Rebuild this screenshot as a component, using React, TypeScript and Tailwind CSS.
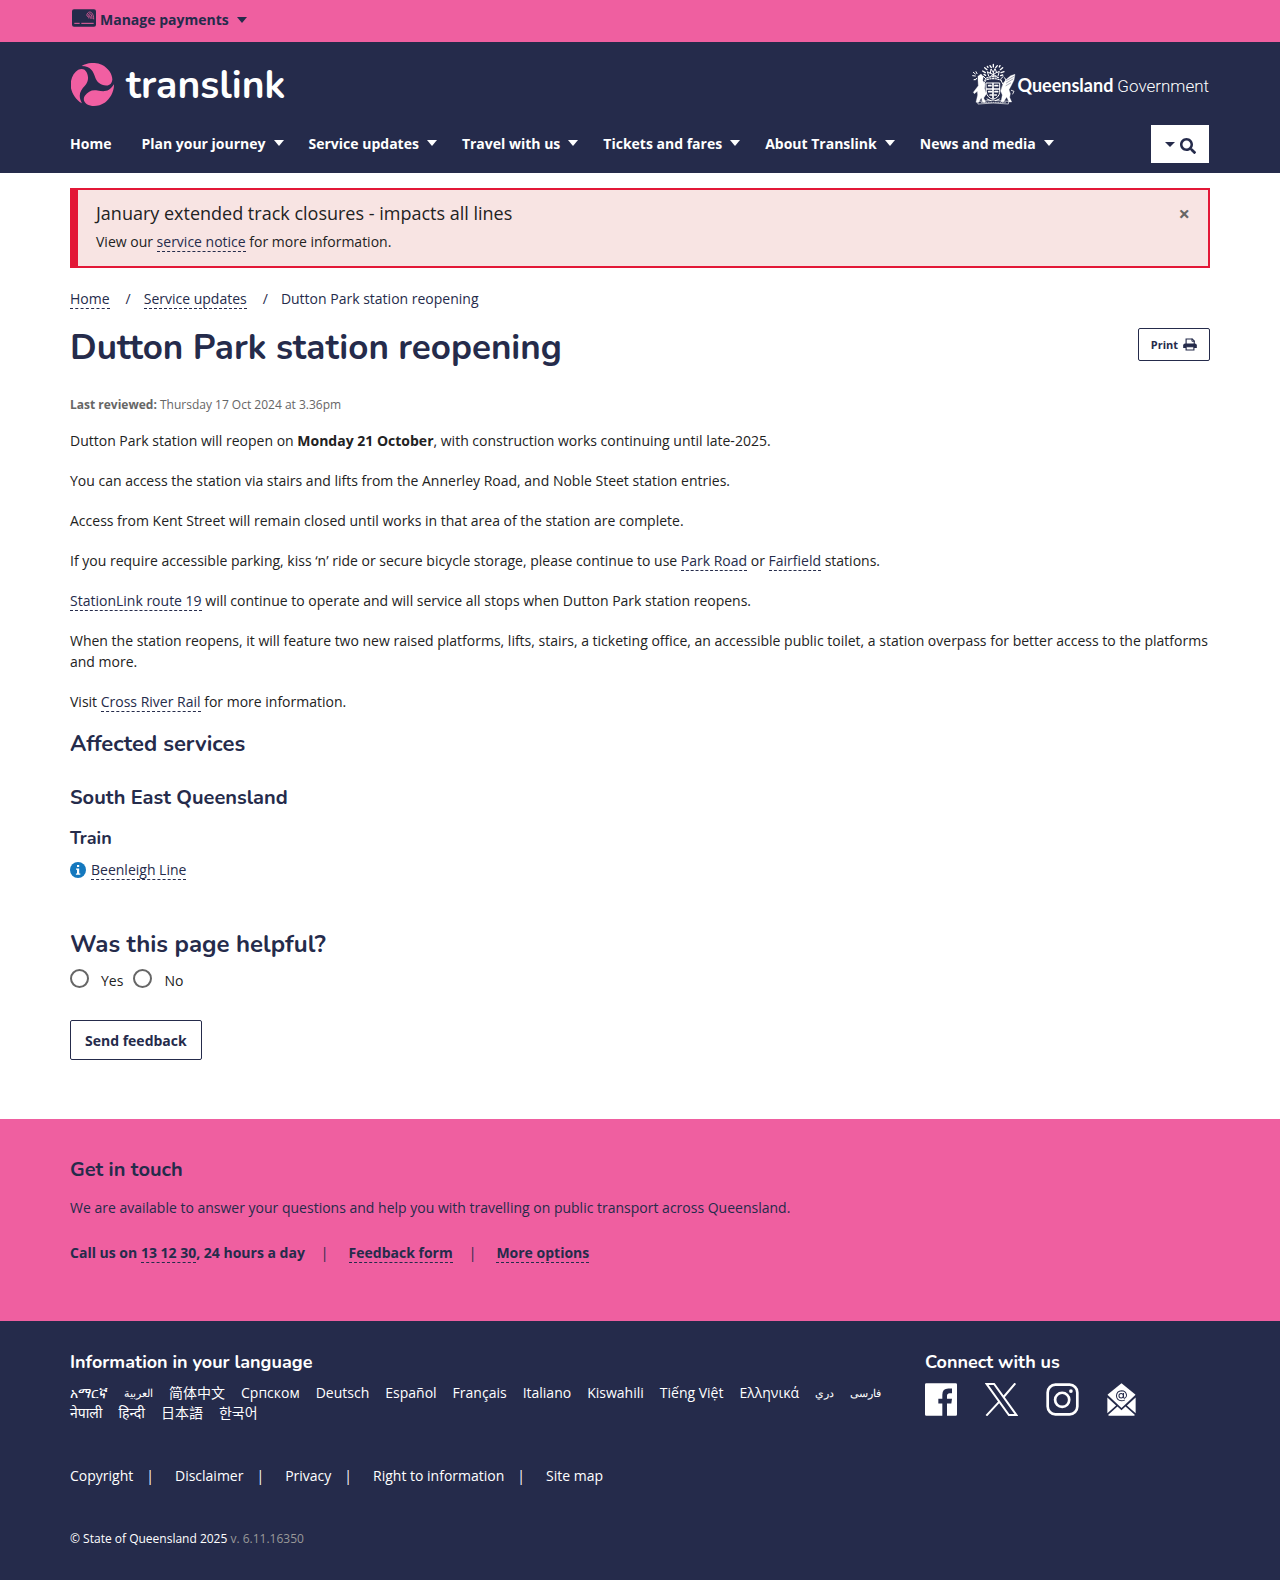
import React from "react";
import { FaSearch } from "react-icons/fa";

const heading = "font-['Nunito','Lato',sans-serif]";

function Caret({ small = false }: { small?: boolean }) {
  return (
    <span
      aria-hidden="true"
      className={`inline-block border-x-transparent border-t-current ${small ? "border-x-[5px] border-t-[5px]" : "border-x-[5px] border-t-[6px]"}`}
    />
  );
}

function DashedLink({ children }: { children: React.ReactNode }) {
  return (
    <a href="#" className="border-b border-dashed border-[#252b4b] text-[#252b4b]">
      {children}
    </a>
  );
}

function CardIcon() {
  return (
    <svg viewBox="0 0 72 54" className="-mt-1 h-[18px] w-6" aria-hidden="true">
      <rect x="0" y="1" width="72" height="52" rx="6" fill="#252b4b" />
      <path d="M7 43h16M28 43h37" stroke="#ef5fa0" strokeWidth="3" />
      <g fill="none" stroke="#ef5fa0" strokeWidth="2.4">
        <path d="M44 20C46 4 65 4 65 31" />
        <path d="M47 24C49 10 60 10 60 30" />
        <path d="M50 28C51 17 55 17 55 29" />
      </g>
    </svg>
  );
}

function TranslinkMark() {
  const blob =
    "M64 196C84 184 108 185 125 192C145 202 157 220 157 237C156 249 148 256 138 255C121 254 110 245 105 230C99 211 92 197 64 196Z";
  return (
    <svg viewBox="32 187 130 130" className="size-[43px]" fill="#f15fa2" aria-hidden="true">
      <path d={blob} />
      <path d={blob} transform="rotate(120 97 252)" />
      <path d={blob} transform="rotate(240 97 252)" />
    </svg>
  );
}

function CoatOfArms() {
  return (
    <svg viewBox="0 0 132 126" className="h-[42px] w-[44px]" fill="none" stroke="#fff" strokeLinecap="round" aria-hidden="true">
      <path d="M18 115q47-6 92 0l-1 8q-45-6-90 0z" strokeWidth="2" />
      <path d="M28 118h72" strokeWidth="2" strokeDasharray="3 4" />
      <path d="M43 60h40v28q-2 16-20 21q-18-5-20-21z" strokeWidth="3" />
      <path d="M44 78h38M63 62v44M50 68h7M69 68h8M50 86h8M69 86h8M54 96h5M68 96h5" strokeWidth="5" />
      <path d="M38 52q25-10 50 0M44 45q19-8 38 0" strokeWidth="3.5" strokeDasharray="4 4" />
      <path d="M50 39l-4-13 9 5 2-13 7 10 5-11 5 12 8-4-4 14" strokeWidth="3" />
      <path d="M54 30l20 10M74 28l-18 12M64 26v16" strokeWidth="3" />
      <path d="M64 4v8M54 8l4 6M76 8l-5 6M38 14l7 6M32 24l8 5M92 14l-7 6M96 26l-9 3M36 34l5 3M92 36l-6 2M46 10l2 3M84 8l-2 4" strokeWidth="4" />
      <path d="M30 46q-6 8 0 18M98 44q8 6 2 16M34 40l8 8M94 40l-8 8M40 54l-4 8M88 54l4 8" strokeWidth="3" />
      <path d="M18 40l9-7 7 8-2 11 7 12-1 13 5 16-8 12 6 13h-9l-4-14-8 14h-8l5-22-1-11-9 7-3-4 15-20-1-16z" fill="#fff" strokeWidth="1" />
      <path d="M4 28l6 5M2 38l8 1M12 26l3 6M14 46l-4 5M6 50l4-1" strokeWidth="3" />
      <path d="M94 60l10-12 12-10 13-4-3 17-9 18-6 11 4 12-2 11 6 14h-8l-7-15-9 14h-8l4-20-5-12z" fill="#fff" strokeWidth="1" />
      <path d="M104 52l22-12M103 60l20-12M102 68l14-8" stroke="#252b4b" strokeWidth="1.2" />
      <path d="M118 82l8 3-4 8" strokeWidth="2.5" />
      <path d="M45 108l12 5M82 108l-12 5" strokeWidth="3" />
    </svg>
  );
}

function PrinterIcon() {
  return (
    <svg viewBox="0 0 42 40" className="h-[13px] w-[14px]" aria-hidden="true">
      <path d="M9 20V3h19l6 6v11" fill="none" stroke="#252b4b" strokeWidth="3.5" />
      <path d="M27 2v8h8" fill="none" stroke="#252b4b" strokeWidth="3" />
      <path d="M6 17h30q6 0 6 6v8H0v-8q0-6 6-6z" fill="#252b4b" />
      <path d="M9 27h24v10H9z" fill="#fff" stroke="#252b4b" strokeWidth="3.5" />
    </svg>
  );
}

function InfoIcon() {
  return (
    <svg viewBox="0 0 16 16" className="size-4" aria-hidden="true">
      <circle cx="8" cy="8" r="8" fill="#1478be" />
      <path d="M7 3h2.2v2H7zM6 6.4h3.2v5h1.1v1.4H5.9v-1.4H7V7.8H6z" fill="#fff" />
    </svg>
  );
}

function FacebookIcon() {
  return (
    <svg viewBox="0 0 96 98" className="h-[33px] w-8" aria-hidden="true">
      <path fill="#fff" d="M4 0h88q4 0 4 4v90q0 4-4 4H66V61h13l2-14H66v-9q0-8 8-8h7V16H70q-18 0-18 19v12H40v14h12v37H4q-4 0-4-4V4q0-4 4-4z" />
    </svg>
  );
}

function XIcon() {
  return (
    <svg viewBox="0 0 98 98" className="size-[33px]" fill="none" stroke="#fff" strokeWidth="6" aria-hidden="true">
      <path d="M5 3h22l66 92H71zM90 1L54 43M44 54L4 97" />
    </svg>
  );
}

function InstagramIcon() {
  return (
    <svg viewBox="0 0 98 98" className="size-[33px]" fill="none" stroke="#fff" strokeWidth="8" aria-hidden="true">
      <rect x="5" y="5" width="88" height="88" rx="23" />
      <circle cx="48" cy="50" r="21" />
      <circle cx="74" cy="24" r="5.5" fill="#fff" stroke="none" />
    </svg>
  );
}

function MailIcon() {
  return (
    <svg viewBox="0 0 86 98" className="h-[33px] w-[29px]" aria-hidden="true">
      <path fill="#fff" d="M43 1L84 34v2L43 74 2 36v-2z" />
      <path fill="#fff" d="M1 43l26 24L1 90zM85 43L59 67l26 23zM31 70l12 11 12-11 28 25q-1 2-4 2H7q-3 0-4-2z" />
      <g fill="none" stroke="#252b4b" strokeWidth="3">
        <circle cx="42" cy="38" r="6.5" />
        <path d="M49 30v11q0 5 4 4 5-2 5-9Q56 23 43 23 29 24 28 38q1 14 15 15 6 0 10-3" />
      </g>
    </svg>
  );
}

const menu = ["Plan your journey", "Service updates", "Travel with us", "Tickets and fares", "About Translink", "News and media"];

const languages = [
  { name: "አማርኛ" },
  { name: "العربية", arabic: true },
  { name: "简体中文" },
  { name: "Српском" },
  { name: "Deutsch" },
  { name: "Español" },
  { name: "Français" },
  { name: "Italiano" },
  { name: "Kiswahili" },
  { name: "Tiếng Việt" },
  { name: "Ελληνικά" },
  { name: "دري", arabic: true },
  { name: "فارسی", arabic: true },
  { name: "नेपाली" },
  { name: "हिन्दी" },
  { name: "日本語" },
  { name: "한국어" },
];

const legal = ["Copyright", "Disclaimer", "Privacy", "Right to information", "Site map"];

const wrap = "mx-auto w-full max-w-[1170px] px-[15px]";

export default function App() {
  return (
    <div className="bg-white font-['Open_Sans','Noto_Sans','Noto_Sans_CJK_SC',sans-serif] text-sm leading-[21px] text-[#222]">
      <div className="bg-[#ef5fa0] text-[#252b4b]">
        <div className={`${wrap} flex h-[42px] items-start pt-[9px]`}>
          <button className="flex items-center gap-1 pl-[2px] font-bold">
            <CardIcon />
            <span className="mr-1">Manage payments</span>
            <Caret />
          </button>
        </div>
      </div>

      <header className="bg-[#252b4b] text-white">
        <div className={wrap}>
          <div className="flex items-center justify-between pt-5">
            <a href="#" aria-label="Translink home" className="flex items-center gap-3 pl-px">
              <TranslinkMark />
              <span className={`${heading} pt-1 text-[39px] leading-[40px] font-bold`}>translink</span>
            </a>
            <a href="#" className="mr-px flex items-center gap-[2px] font-['Lato',sans-serif]">
              <CoatOfArms />
              <span className="flex items-baseline gap-1 pt-[2px]">
                <b className="text-lg">Queensland</b>
                <span className="font-['Roboto',sans-serif] text-[17px] font-light">Government</span>
              </span>
            </a>
          </div>
          <div className="flex items-center justify-between pt-[19px] pb-[10px]">
            <nav className="flex gap-[25px] pb-[2px] font-bold">
              <a href="#" className="mr-[5px]">Home</a>
              {menu.map((m) => (
                <button key={m} className="flex items-center gap-2">
                  {m}
                  <Caret />
                </button>
              ))}
            </nav>
            <button aria-label="Search" className="mr-px flex h-[38px] w-[58px] items-center justify-center gap-[5px] bg-white text-[#252b4b]">
              <Caret small />
              <FaSearch size={16} className="mt-[3px]" />
            </button>
          </div>
        </div>
      </header>

      <main className={wrap}>
        <section className="mt-[15px] flex items-start justify-between border-2 border-l-8 border-[#e31837] bg-[#f8e4e3] px-[18px] pt-[10px] pb-3">
          <div>
            <h2 className="text-lg leading-[26px]">January extended track closures - impacts all lines</h2>
            <p className="mt-1 leading-6">
              View our <DashedLink>service notice</DashedLink> for more information.
            </p>
          </div>
          <button aria-label="Close" className="mt-[2px] text-xl leading-6 font-bold text-[#666]">×</button>
        </section>

        <nav aria-label="Breadcrumb" className="mt-5 flex gap-4 text-[#252b4b]">
          <span><DashedLink>Home</DashedLink></span>
          <span>/</span>
          <span className="-ml-[3px]"><DashedLink>Service updates</DashedLink></span>
          <span>/</span>
          <span className="-ml-[3px]">Dutton Park station reopening</span>
        </nav>

        <div className="mt-[19px] flex items-start justify-between">
          <h1 className={`${heading} text-[35px] leading-10 font-bold text-[#252b4b]`}>Dutton Park station reopening</h1>
          <button className="flex h-[33px] items-center gap-[5px] rounded-[2px] border border-[#252b4b] px-3 text-[11px] font-bold text-[#252b4b]">
            Print
            <PrinterIcon />
          </button>
        </div>

        <p className="mt-[29px] text-xs text-[#666]">
          <b>Last reviewed:</b> Thursday 17 Oct 2024 at 3.36pm
        </p>

        <div className="mt-[17px] flex flex-col gap-[19px]">
          <p>Dutton Park station will reopen on <b>Monday 21 October</b>, with construction works continuing until late-2025.</p>
          <p>You can access the station via stairs and lifts from the Annerley Road, and Noble Steet station entries.</p>
          <p>Access from Kent Street will remain closed until works in that area of the station are complete.</p>
          <p>If you require accessible parking, kiss ‘n’ ride or secure bicycle storage, please continue to use <DashedLink>Park Road</DashedLink> or <DashedLink>Fairfield</DashedLink> stations.</p>
          <p><DashedLink>StationLink route 19</DashedLink> will continue to operate and will service all stops when Dutton Park station reopens.</p>
          <p>When the station reopens, it will feature two new raised platforms, lifts, stairs, a ticketing office, an accessible public toilet, a station overpass for better access to the platforms and more.</p>
          <p>Visit <DashedLink>Cross River Rail</DashedLink> for more information.</p>
        </div>

        <h2 className={`${heading} mt-4 text-[22px] leading-8 font-bold text-[#252b4b]`}>Affected services</h2>
        <h3 className={`${heading} mt-6 text-xl leading-7 font-bold text-[#252b4b]`}>South East Queensland</h3>
        <h4 className={`${heading} mt-[14px] text-lg leading-6 font-bold text-[#252b4b]`}>Train</h4>
        <p className="mt-[9px] flex items-center gap-[5px]">
          <InfoIcon />
          <span><DashedLink>Beenleigh Line</DashedLink></span>
        </p>

        <form onSubmit={(e) => e.preventDefault()}>
          <fieldset className="mt-12">
            <legend className={`${heading} text-2xl leading-8 font-bold text-[#252b4b]`}>Was this page helpful?</legend>
            <div className="mt-[10px] flex items-center gap-[10px]">
              {["Yes", "No"].map((v) => (
                <label key={v} className="flex items-center gap-3">
                  <input type="radio" name="helpful" value={v} className="-mt-1 size-[19px] appearance-none rounded-full border-2 border-[#666] checked:border-[6px]" />
                  {v}
                </label>
              ))}
            </div>
          </fieldset>
          <button className="mt-[29px] h-10 rounded-[2px] border border-[#252b4b] px-[14px] font-bold text-[#252b4b]">Send feedback</button>
        </form>
      </main>

      <section className="mt-[59px] bg-[#ef5fa0] pt-[37px] pb-[58px] text-[#252b4b]">
        <div className={wrap}>
          <h2 className={`${heading} text-xl leading-7 font-bold`}>Get in touch</h2>
          <p className="mt-[13px]">We are available to answer your questions and help you with travelling on public transport across Queensland.</p>
          <p className="mt-6 flex gap-4 font-bold">
            <span>Call us on <DashedLink>13 12 30</DashedLink>, 24 hours a day</span>
            <span className="mr-1 font-normal">|</span>
            <span><DashedLink>Feedback form</DashedLink></span>
            <span className="mr-1 font-normal">|</span>
            <span><DashedLink>More options</DashedLink></span>
          </p>
        </div>
      </section>

      <footer className="bg-[#252b4b] pt-7 pb-[31px] text-white">
        <div className={wrap}>
          <div className="grid grid-cols-[3fr_1fr]">
            <div>
              <h2 className={`${heading} text-lg leading-[26px] font-bold`}>Information in your language</h2>
              <ul className="mt-2 flex max-w-[830px] flex-wrap gap-x-4 leading-5">
                {languages.map((l) => (
                  <li key={l.name} className={l.arabic ? "text-[11px] leading-5" : ""}><a href="#">{l.name}</a></li>
                ))}
              </ul>
            </div>
            <div>
              <h2 className={`${heading} text-lg leading-[26px] font-bold`}>Connect with us</h2>
              <div className="mt-2 flex gap-7">
                <a href="#" aria-label="Facebook"><FacebookIcon /></a>
                <a href="#" aria-label="X"><XIcon /></a>
                <a href="#" aria-label="Instagram"><InstagramIcon /></a>
                <a href="#" aria-label="Email"><MailIcon /></a>
              </div>
            </div>
          </div>
          <ul className="mt-[42px] flex gap-[21px]">
            {legal.map((l, i) => (
              <li key={l} className="flex gap-[13px]">
                <a href="#">{l}</a>
                {i < legal.length - 1 && <span>|</span>}
              </li>
            ))}
          </ul>
          <p className="mt-[43px] text-xs leading-5">
            © State of Queensland 2025 <span className="text-[#999]">v. 6.11.16350</span>
          </p>
        </div>
      </footer>
    </div>
  );
}
